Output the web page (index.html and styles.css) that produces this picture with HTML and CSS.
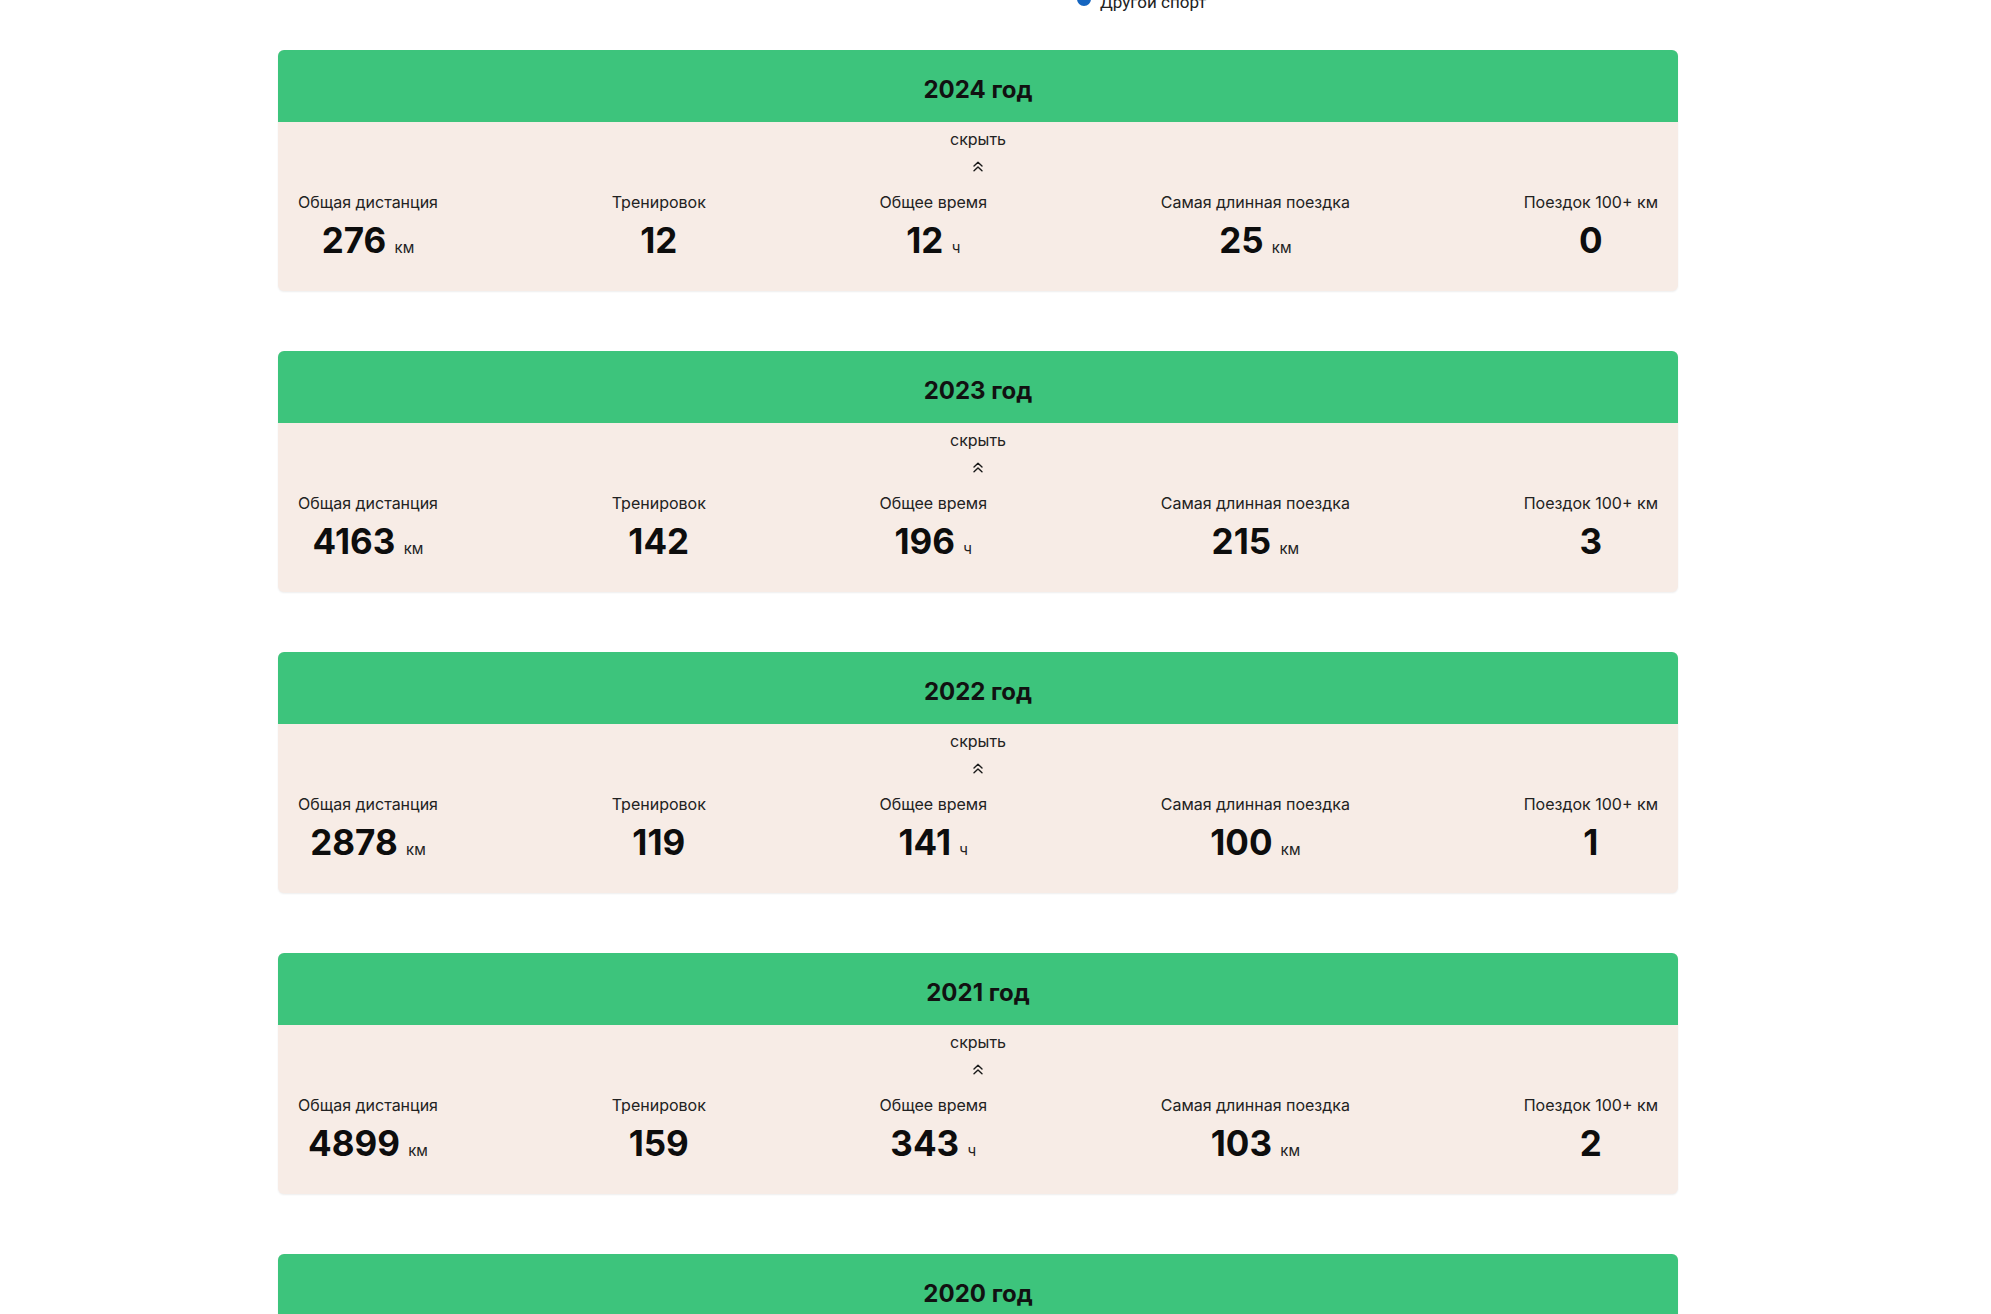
FILE: index.html
```html
<!DOCTYPE html>
<html lang="ru">
<head>
<meta charset="utf-8">
<title>Статистика по годам</title>
<link rel="stylesheet" href="styles.css">
</head>
<body>
<div class="page">
  <div class="legend">
    <span class="legend-dot"></span>
    <span class="legend-text">Другой спорт</span>
  </div>

  <section class="year-card">
    <div class="year-head">2024 год</div>
    <div class="year-body">
      <div class="toggle">
        <span class="toggle-text">скрыть</span>
        <svg class="chevron" viewBox="0 0 12 11" width="12" height="11"><path d="M2 5 L6 1.2 L10 5 M2 9.8 L6 6 L10 9.8"/></svg>
      </div>
      <div class="stats">
        <div class="stat"><div class="stat-label">Общая дистанция</div><div class="stat-value">276 <span class="unit">км</span></div></div>
        <div class="stat"><div class="stat-label">Тренировок</div><div class="stat-value">12</div></div>
        <div class="stat"><div class="stat-label">Общее время</div><div class="stat-value">12 <span class="unit">ч</span></div></div>
        <div class="stat"><div class="stat-label">Самая длинная поездка</div><div class="stat-value">25 <span class="unit">км</span></div></div>
        <div class="stat"><div class="stat-label">Поездок 100+ км</div><div class="stat-value">0</div></div>
      </div>
    </div>
  </section>

  <section class="year-card">
    <div class="year-head">2023 год</div>
    <div class="year-body">
      <div class="toggle">
        <span class="toggle-text">скрыть</span>
        <svg class="chevron" viewBox="0 0 12 11" width="12" height="11"><path d="M2 5 L6 1.2 L10 5 M2 9.8 L6 6 L10 9.8"/></svg>
      </div>
      <div class="stats">
        <div class="stat"><div class="stat-label">Общая дистанция</div><div class="stat-value">4163 <span class="unit">км</span></div></div>
        <div class="stat"><div class="stat-label">Тренировок</div><div class="stat-value">142</div></div>
        <div class="stat"><div class="stat-label">Общее время</div><div class="stat-value">196 <span class="unit">ч</span></div></div>
        <div class="stat"><div class="stat-label">Самая длинная поездка</div><div class="stat-value">215 <span class="unit">км</span></div></div>
        <div class="stat"><div class="stat-label">Поездок 100+ км</div><div class="stat-value">3</div></div>
      </div>
    </div>
  </section>

  <section class="year-card">
    <div class="year-head">2022 год</div>
    <div class="year-body">
      <div class="toggle">
        <span class="toggle-text">скрыть</span>
        <svg class="chevron" viewBox="0 0 12 11" width="12" height="11"><path d="M2 5 L6 1.2 L10 5 M2 9.8 L6 6 L10 9.8"/></svg>
      </div>
      <div class="stats">
        <div class="stat"><div class="stat-label">Общая дистанция</div><div class="stat-value">2878 <span class="unit">км</span></div></div>
        <div class="stat"><div class="stat-label">Тренировок</div><div class="stat-value">119</div></div>
        <div class="stat"><div class="stat-label">Общее время</div><div class="stat-value">141 <span class="unit">ч</span></div></div>
        <div class="stat"><div class="stat-label">Самая длинная поездка</div><div class="stat-value">100 <span class="unit">км</span></div></div>
        <div class="stat"><div class="stat-label">Поездок 100+ км</div><div class="stat-value">1</div></div>
      </div>
    </div>
  </section>

  <section class="year-card">
    <div class="year-head">2021 год</div>
    <div class="year-body">
      <div class="toggle">
        <span class="toggle-text">скрыть</span>
        <svg class="chevron" viewBox="0 0 12 11" width="12" height="11"><path d="M2 5 L6 1.2 L10 5 M2 9.8 L6 6 L10 9.8"/></svg>
      </div>
      <div class="stats">
        <div class="stat"><div class="stat-label">Общая дистанция</div><div class="stat-value">4899 <span class="unit">км</span></div></div>
        <div class="stat"><div class="stat-label">Тренировок</div><div class="stat-value">159</div></div>
        <div class="stat"><div class="stat-label">Общее время</div><div class="stat-value">343 <span class="unit">ч</span></div></div>
        <div class="stat"><div class="stat-label">Самая длинная поездка</div><div class="stat-value">103 <span class="unit">км</span></div></div>
        <div class="stat"><div class="stat-label">Поездок 100+ км</div><div class="stat-value">2</div></div>
      </div>
    </div>
  </section>

  <section class="year-card">
    <div class="year-head">2020 год</div>
    <div class="year-body">
      <div class="toggle">
        <span class="toggle-text">скрыть</span>
        <svg class="chevron" viewBox="0 0 12 11" width="12" height="11"><path d="M2 5 L6 1.2 L10 5 M2 9.8 L6 6 L10 9.8"/></svg>
      </div>
    </div>
  </section>
</div>
</body>
</html>
```

FILE: styles.css
```css
html, body {
  margin: 0;
  padding: 0;
  background: #ffffff;
}
body {
  font-family: Inter, "Noto Sans", sans-serif;
  color: #111111;
  overflow: hidden;
}
.page {
  width: 1400px;
  margin-left: 278px;
}
.legend {
  display: flex;
  align-items: center;
  gap: 9px;
  height: 20px;
  margin-top: -8px;
  margin-left: 799px;
  font-family: Roboto, "Liberation Sans", sans-serif;
  font-size: 17px;
  line-height: 20px;
  color: #222;
}
.legend-dot {
  width: 14px;
  height: 14px;
  border-radius: 50%;
  background: #1565c0;
  margin-top: -6px;
}
.year-card {
  margin-top: 38px;
  border-radius: 6px;
  background: #f7ece6;
  box-shadow: 0 1px 2px rgba(0, 0, 0, 0.07);
  overflow: hidden;
}
.year-card + .year-card {
  margin-top: 60px;
}
.year-head {
  background: #3dc47c;
  text-align: center;
  font-size: 24px;
  font-weight: 700;
  line-height: 29px;
  padding: 25px 0 18px;
  color: #111;
}
.year-body {
  padding: 7px 20px 31px;
}
.toggle {
  display: flex;
  flex-direction: column;
  align-items: center;
}
.toggle-text {
  font-size: 16px;
  line-height: 20px;
  color: #222;
}
.chevron {
  display: block;
  margin-top: 12px;
  fill: none;
  stroke: #1a1a1a;
  stroke-width: 1.4;
  stroke-linecap: round;
  stroke-linejoin: round;
}
.stats {
  display: flex;
  justify-content: space-between;
  margin-top: 20px;
}
.stat {
  display: flex;
  flex-direction: column;
  align-items: center;
}
.stat-label {
  font-size: 16px;
  line-height: 20px;
  color: #222;
  white-space: nowrap;
}
.stat-value {
  margin-top: 8px;
  font-size: 35px;
  font-weight: 700;
  line-height: 40px;
  height: 40px;
  color: #0d0d0d;
  white-space: nowrap;
}
.unit {
  font-size: 15px;
  font-weight: 400;
  line-height: 1;
  color: #222;
}
```
